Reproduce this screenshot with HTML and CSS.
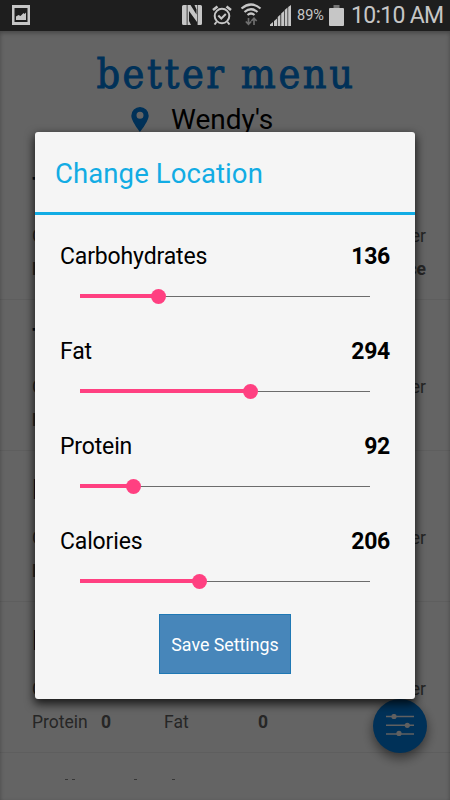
FILE: index.html
```
<!DOCTYPE html>
<html lang="en">
<head>
    <meta charset="UTF-8">
    <meta name="viewport" content="width=device-width, initial-scale=1.0">
    <title>better menu</title>
    <link rel="stylesheet" href="styles.css">
</head>
<body>
    <div class="app">
        <!-- status bar -->
        <div class="status">
            <svg class="icon-pic" width="18" height="20" viewBox="0 0 18 20"><path fill="#c6c6c6" fill-rule="evenodd" d="M0 0h18v20H0zM2.500 3v14h13V3z"/><path fill="#c6c6c6" d="M4 15v-3.500l2.500-1.500 2 1 3-3 1 1 1.500-1.500V15z"/></svg>
            <div class="status-right">
                <svg width="20" height="20" viewBox="0 0 20 20"><path fill="#c6c6c6" d="M1.500 0H4.700v20H1.500Q0 20 0 18.500v-17Q0 0 1.500 0zM5.500 0h3l6 9.500V4.500L12.500 0H15v17L7 6v10l2 4H5.500zM15.600 0h2.900Q20 0 20 1.500v17q0 1.500-1.500 1.500h-2.900z"/></svg>
                <svg class="icon-alarm" width="20" height="20" viewBox="0 0 20 20" fill="none" stroke="#c6c6c6"><circle cx="10" cy="11" r="7.300" stroke-width="2"/><path stroke-width="2.600" d="M1 5l4.500-3.600M19 5l-4.500-3.600"/><path stroke-width="2" d="M4.500 17L2.500 19.500M15.500 17l2 2.500M6.300 10.500l3 3 4.500-4.500"/></svg>
                <svg class="icon-wifi" width="22" height="23" viewBox="0 0 22 23" fill="none" stroke="#c6c6c6" stroke-width="2.200"><path d="M1.500 5.500q9.500-8 19 0M4.500 9q6.500-5.500 13 0M7.500 12q3.500-3 7 0"/><path stroke="#6e6e6e" stroke-width="1.700" d="M8.500 15v6M5.800 18.500l2.700 2.700 2.700-2.700M14 22v-6.500M11.300 18l2.700-2.700 2.700 2.700"/></svg>
                <svg class="icon-signal" width="21" height="21" viewBox="0 0 21 21"><path fill="#c6c6c6" d="M0 21v-1.500L3 17v4zM4 21v-5l3-2.500V21zM7.700 21v-9l2.700-2.500V21zM11.200 21V8.500L14 6v15zM14.700 21V5l2.800-2.500V21zM18.200 21V2L21 0v21z"/></svg>
                <span class="percent">89%</span>
                <svg class="icon-battery" width="15" height="21" viewBox="0 0 15 21"><path fill="#747474" d="M4.500 0h6v3h-6z"/><path fill="#c6c6c6" d="M0 4q0-1 1-1h13q1 0 1 1v16q0 1-1 1H1q-1 0-1-1z"/></svg>
                <span class="clock">10:10 AM</span>
            </div>
        </div>

        <!-- restaurant page -->
        <div class="page">
            <div class="header">
                <h1>better menu</h1>
                <div class="place">
                    <svg width="18" height="25" viewBox="0 0 18 25"><path fill="#007adc" fill-rule="evenodd" d="M9 0a8.700 8.700 0 0 1 8.700 8.700C17.700 14 9 25 9 25S.3 14 .3 8.700A8.700 8.700 0 0 1 9 0zm0 4.800a3.500 3.500 0 1 0 0 7 3.500 3.500 0 0 0 0-7z"/></svg>
                    <span>Wendy's</span>
                </div>
            </div>
            <div class="item">
                <h2>T</h2>
                <div class="info"><span>C</span><span>er</span></div>
                <div class="info bold"><span>P</span><span>ce</span></div>
            </div>
            <div class="item">
                <h2>T</h2>
                <div class="info"><span>C</span><span>er</span></div>
                <div class="info bold"><span>P</span></div>
            </div>
            <div class="item">
                <h2>B</h2>
                <div class="info"><span>C</span><span>er</span></div>
                <div class="info bold"><span>P</span></div>
            </div>
            <div class="item">
                <h2>B</h2>
                <div class="info"><span>C</span><span>er</span></div>
                <div class="info stats"><span>Protein</span><b>0</b><span class="fat">Fat</span><b class="fat-num">0</b></div>
            </div>
            <div class="next"><i></i><i></i><i></i><i></i></div>
        </div>

        <div class="fab">
            <svg width="28" height="22" viewBox="0 0 28 22"><path stroke="#f0f0f0" stroke-width="1.600" d="M0 2.500h28M0 11.300h28M0 20h28"/><g fill="#f0f0f0"><circle cx="8" cy="2.500" r="2.600"/><circle cx="21.300" cy="11.300" r="2.600"/><circle cx="13" cy="19.400" r="2.600"/></g></svg>
        </div>
        <div class="mask"></div>

        <!-- dialog -->
        <div class="dialog">
            <div class="dialog-title"><span>Change Location</span></div>
            <div class="dialog-body">
                <div class="setting">
                    <div class="row"><span>Carbohydrates</span><b>136</b></div>
                    <div class="slider"><div class="fill" style="width: 27.2%"></div></div>
                </div>
                <div class="setting">
                    <div class="row"><span>Fat</span><b>294</b></div>
                    <div class="slider"><div class="fill" style="width: 58.8%"></div></div>
                </div>
                <div class="setting">
                    <div class="row"><span>Protein</span><b>92</b></div>
                    <div class="slider"><div class="fill" style="width: 18.4%"></div></div>
                </div>
                <div class="setting">
                    <div class="row"><span>Calories</span><b>206</b></div>
                    <div class="slider"><div class="fill" style="width: 41.2%"></div></div>
                </div>
                <button class="save">Save Settings</button>
            </div>
        </div>
    </div>
</body>
</html>
```
FILE: styles.css
```
*{
    margin: 0;
    padding: 0;
    box-sizing: border-box;
}
body{
    font-family: Roboto, "Noto Sans", sans-serif;
    background: #646464;
}
.app{
    position: relative;
    width: 450px;
    height: 800px;
    overflow: hidden;
}

/* status bar */
.status{
    position: relative;
    z-index: 2;
    display: flex;
    justify-content: space-between;
    height: 31px;
    padding: 5px 7px 0 12px;
    background: #1e1e1e;
    color: #c6c6c6;
}
.status-right{
    display: flex;
}
.icon-alarm{
    margin-left: 10px;
}
.icon-wifi{
    margin: -2px 0 0 8px;
}
.icon-signal{
    margin-left: 8px;
}
.percent{
    width: 28px;
    margin-left: 6px;
    font-size: 14.5px;
    line-height: 22px;
    white-space: nowrap;
}
.icon-battery{
    margin-left: 4px;
}
.clock{
    width: 92px;
    margin-left: 7px;
    font-size: 23px;
    letter-spacing: -0.7px;
    line-height: 21px;
    white-space: nowrap;
}

/* page */
.page{
    height: 769px;
    background: #fbfbfb;
}
.header{
    height: 118px;
    padding-top: 18px;
    text-align: center;
}
.header h1{
    height: 52px;
    padding-left: 2px;
    font-family: "DejaVu Serif Condensed", "DejaVu Serif", serif;
    font-weight: normal;
    font-size: 41px;
    line-height: 51px;
    letter-spacing: 2.6px;
    color: #007adc;
    -webkit-text-stroke: 0.9px #007adc;
    white-space: nowrap;
}
.place{
    display: flex;
    padding: 6px 0 0 131px;
}
.place span{
    margin: -5px 0 0 22px;
    font-size: 28px;
    line-height: 36px;
    color: #000;
}
.item{
    height: 151px;
    padding: 22px 24px 0 32px;
    border-bottom: 1px solid #ebebeb;
}
.item h2{
    height: 49px;
    font-size: 28px;
    line-height: 33px;
    font-weight: 500;
    color: #00264d;
}
.info{
    display: flex;
    justify-content: space-between;
    height: 33px;
    font-size: 17.5px;
    line-height: 33px;
    color: #606060;
}
.info.bold{
    font-weight: bold;
}
.info.stats{
    justify-content: flex-start;
}
.stats span{
    width: 69px;
}
.stats b{
    width: 63px;
}
.stats .fat{
    width: 94px;
}
.next{
    display: flex;
    padding: 26px 0 0 65px;
}
.next i{
    width: 3px;
    height: 1px;
    margin-right: 4px;
    background: #888;
}
.next i:nth-child(2){
    margin-right: 59px;
}
.next i:nth-child(3){
    margin-right: 35px;
}

.fab{
    position: absolute;
    left: 373px;
    top: 699px;
    width: 54px;
    height: 54px;
    padding: 15px 13px;
    border-radius: 50%;
    background: #007adc;
    box-shadow: 0 5px 12px rgba(0,0,0,0.5);
}
.mask{
    position: absolute;
    left: 0;
    top: 31px;
    width: 450px;
    height: 769px;
    background: rgba(0,0,0,0.6);
    box-shadow: inset 0 2px 4px rgba(0,0,0,0.3);
}

/* dialog */
.dialog{
    position: absolute;
    left: 35px;
    top: 132px;
    width: 380px;
    height: 567px;
    border-radius: 3px;
    background: #f5f5f5;
    box-shadow: 0 4px 10px 1px rgba(0,0,0,0.75);
}
.dialog-title{
    height: 83px;
    padding-left: 20px;
    border-bottom: 3px solid #12ace4;
    font-size: 27.5px;
    letter-spacing: 0.1px;
    line-height: 84px;
    color: #12ace4;
}
.dialog-body{
    padding: 26px 25px 0;
}
.setting{
    height: 95px;
}
.row{
    display: flex;
    justify-content: space-between;
    height: 32px;
    font-size: 23px;
    letter-spacing: -0.15px;
    line-height: 32px;
    color: #000;
}
.row b{
    letter-spacing: -0.3px;
}
.slider{
    display: flex;
    align-items: center;
    height: 16px;
    margin: 15px 20px 0;
    background: linear-gradient(#6c6c6c, #6c6c6c) 0 8px / 100% 1px no-repeat;
}
.fill{
    position: relative;
    height: 4px;
    background: #ff4081;
}
.fill::after{
    content: "";
    position: absolute;
    right: -7.5px;
    top: -5.5px;
    width: 15px;
    height: 15px;
    border-radius: 50%;
    background: #ff4081;
}
.save{
    display: block;
    width: 132px;
    height: 60px;
    margin: -7px 0 0 99px;
    border: 1px solid #1f78b4;
    background: #4786ba;
    font-family: Roboto, sans-serif;
    font-size: 17.8px;
    color: #fff;
    white-space: nowrap;
}
```
